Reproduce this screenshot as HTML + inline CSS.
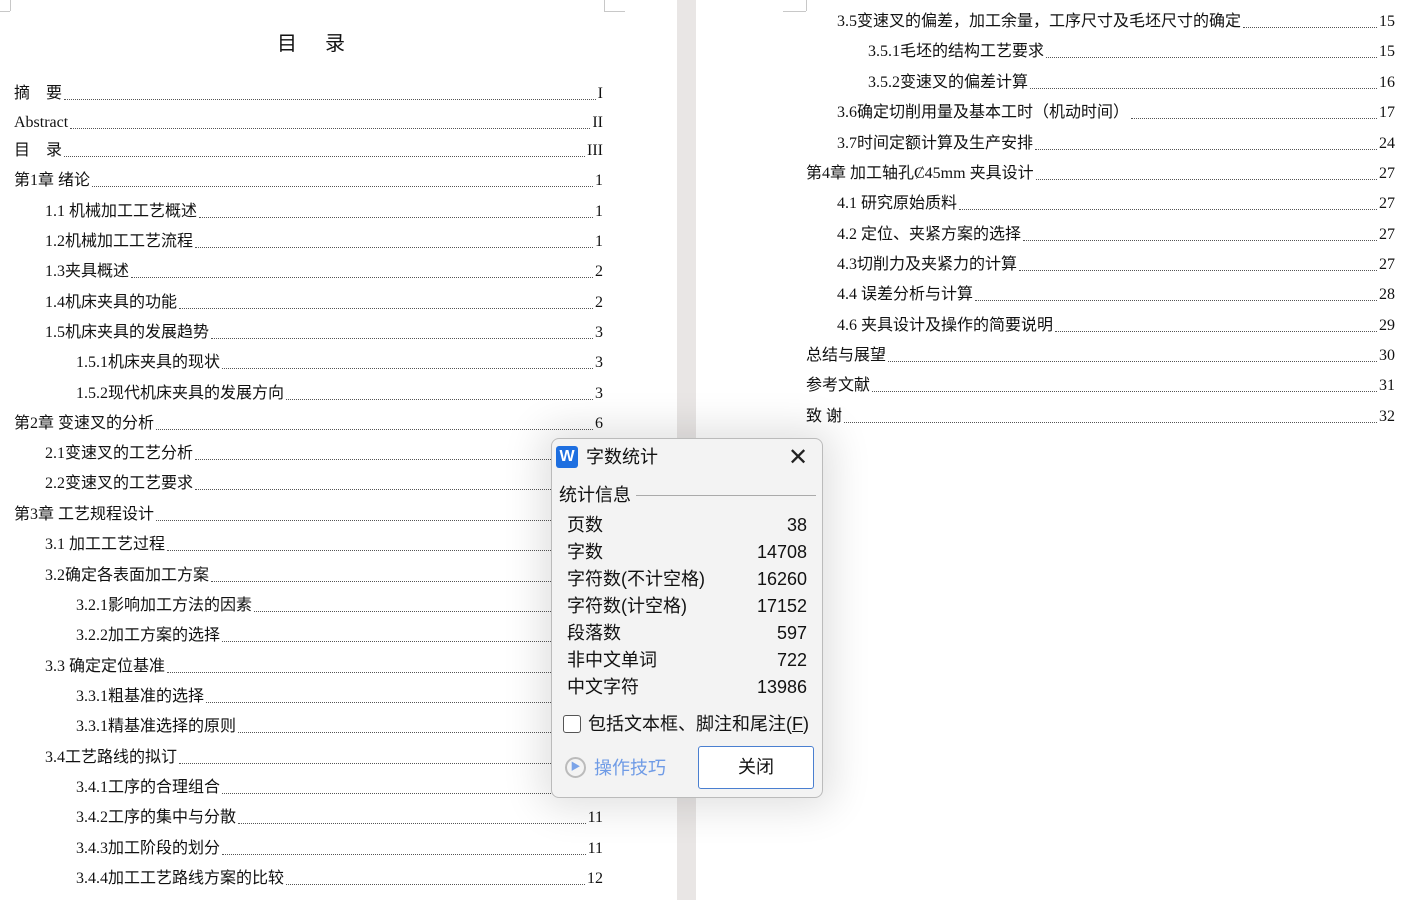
<!DOCTYPE html>
<html><head><meta charset="utf-8"><style>
body{margin:0;width:1402px;height:900px;overflow:hidden;background:#fff;position:relative;font-family:"Liberation Serif","Noto Sans CJK SC",serif;color:#111}
.gut{position:absolute;left:677px;top:0;width:19px;height:900px;background:#e9e6e5}
.m{position:absolute;background:#c8c8c8}
.r{position:absolute;height:22px;display:flex;align-items:flex-end;font-size:16px;line-height:22px;white-space:nowrap}
.r .d{flex:1;border-bottom:1px dotted #555;margin:0 2px 5px 2px;height:1px}
.dlg{position:absolute;left:551px;top:438px;width:270px;height:358px;background:#f3f3f3;border:1px solid #bbb;border-radius:8px;box-shadow:0 0 40px 10px rgba(0,0,0,.12);font-family:"Liberation Sans","Noto Sans CJK SC",sans-serif;color:#111}
.dlg .t{position:absolute;font-size:18px;line-height:24px;white-space:nowrap}
.row{position:absolute;left:15px;width:240px;font-size:18px;line-height:27px;display:flex;justify-content:space-between}
</style></head><body>
<div class="gut"></div>
<div class="m" style="left:10px;top:0;width:1px;height:11px"></div>
<div class="m" style="left:0;top:11px;width:10px;height:1px"></div>
<div class="m" style="left:604px;top:0;width:1px;height:11px"></div>
<div class="m" style="left:604px;top:11px;width:21px;height:1px"></div>
<div class="m" style="left:806px;top:0;width:1px;height:11px"></div>
<div class="m" style="left:783px;top:11px;width:23px;height:1px"></div>
<div style="position:absolute;left:277px;top:27px;font-size:20px;letter-spacing:4px;font-family:'Noto Sans CJK SC',sans-serif">目　录</div>
<div id="L"></div>
<script>
var L=[[92,14,"摘　要","I"],[121,14,"Abstract","II"],[149,14,"目　录","III"],[179,14,"第1章 绪论","1"],[210,45,"1.1 机械加工工艺概述","1"],[240,45,"1.2机械加工工艺流程","1"],[270,45,"1.3夹具概述","2"],[301,45,"1.4机床夹具的功能","2"],[331,45,"1.5机床夹具的发展趋势","3"],[361,76,"1.5.1机床夹具的现状","3"],[392,76,"1.5.2现代机床夹具的发展方向","3"],[422,14,"第2章 变速叉的分析","6"],[452,45,"2.1变速叉的工艺分析","6"],[482,45,"2.2变速叉的工艺要求","6"],[513,14,"第3章 工艺规程设计","7"],[543,45,"3.1 加工工艺过程","7"],[574,45,"3.2确定各表面加工方案","8"],[604,76,"3.2.1影响加工方法的因素","8"],[634,76,"3.2.2加工方案的选择","8"],[665,45,"3.3 确定定位基准","9"],[695,76,"3.3.1粗基准的选择","9"],[725,76,"3.3.1精基准选择的原则","9"],[756,45,"3.4工艺路线的拟订","10"],[786,76,"3.4.1工序的合理组合","10"],[816,76,"3.4.2工序的集中与分散","11"],[847,76,"3.4.3加工阶段的划分","11"],[877,76,"3.4.4加工工艺路线方案的比较","12"]];
var R=[[20,837,"3.5变速叉的偏差，加工余量，工序尺寸及毛坯尺寸的确定","15"],[50,868,"3.5.1毛坯的结构工艺要求","15"],[81,868,"3.5.2变速叉的偏差计算","16"],[111,837,"3.6确定切削用量及基本工时（机动时间）","17"],[142,837,"3.7时间定额计算及生产安排","24"],[172,806,"第4章 加工轴孔Ȼ45mm 夹具设计","27"],[202,837,"4.1 研究原始质料","27"],[233,837,"4.2 定位、夹紧方案的选择","27"],[263,837,"4.3切削力及夹紧力的计算","27"],[293,837,"4.4 误差分析与计算","28"],[324,837,"4.6 夹具设计及操作的简要说明","29"],[354,806,"总结与展望","30"],[384,806,"参考文献","31"],[415,806,"致 谢","32"]];
var h="";
function add(a,right){a.forEach(function(e){h+='<div class="r" style="top:'+(e[0]-9)+'px;left:'+e[1]+'px;width:'+(right-e[1])+'px"><span>'+e[2]+'</span><span class="d"></span><span class="p">'+e[3]+'</span></div>';});}
add(L,603);add(R,1395);
document.getElementById("L").innerHTML=h;
</script>
<div class="dlg">
<div style="position:absolute;left:4px;top:7px;width:22px;height:22px;background:#1e6fe0;border-radius:3px;color:#fff;font:bold 16px 'Liberation Sans',sans-serif;text-align:center;line-height:22px">W</div>
<div class="t" style="left:34px;top:6px">字数统计</div>
<div style="position:absolute;left:236px;top:5px;font-size:24px;line-height:26px;font-family:'DejaVu Sans',sans-serif;color:#222">✕</div>
<div class="t" style="left:7px;top:44px">统计信息</div>
<div style="position:absolute;left:84px;top:56px;width:180px;height:1px;background:#aaa"></div>
<div class="row" style="top:73px"><span>页数</span><span>38</span></div>
<div class="row" style="top:100px"><span>字数</span><span>14708</span></div>
<div class="row" style="top:127px"><span>字符数(不计空格)</span><span>16260</span></div>
<div class="row" style="top:154px"><span>字符数(计空格)</span><span>17152</span></div>
<div class="row" style="top:181px"><span>段落数</span><span>597</span></div>
<div class="row" style="top:208px"><span>非中文单词</span><span>722</span></div>
<div class="row" style="top:235px"><span>中文字符</span><span>13986</span></div>
<div style="position:absolute;left:11px;top:276px;width:16px;height:16px;border:1px solid #555;border-radius:3px;background:#fff"></div>
<div class="t" style="left:36px;top:273px">包括文本框、脚注和尾注(<u>F</u>)</div>
<div style="position:absolute;left:13px;top:318px;width:17px;height:17px;border:2px solid #bbb;border-radius:50%;color:#7aa3e8;font-size:10px;line-height:17px;text-align:center">▶</div>
<div class="t" style="left:42px;top:317px;color:#6f9be6">操作技巧</div>
<div style="position:absolute;left:146px;top:307px;width:114px;height:41px;border:1px solid #4a7fd0;border-radius:3px;background:#fff;font-size:18px;line-height:41px;text-align:center">关闭</div>
</div>
</body></html>
